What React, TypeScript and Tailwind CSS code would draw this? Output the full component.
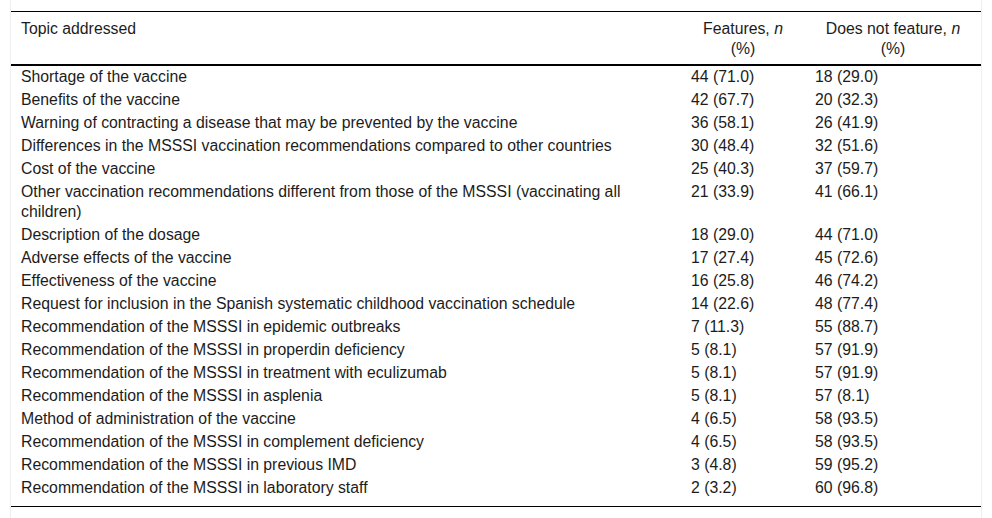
const rows: [string, string, string][] = [
  ['Shortage of the vaccine', '44 (71.0)', '18 (29.0)'],
  ['Benefits of the vaccine', '42 (67.7)', '20 (32.3)'],
  ['Warning of contracting a disease that may be prevented by the vaccine', '36 (58.1)', '26 (41.9)'],
  ['Differences in the MSSSI vaccination recommendations compared to other countries', '30 (48.4)', '32 (51.6)'],
  ['Cost of the vaccine', '25 (40.3)', '37 (59.7)'],
  [
    'Other vaccination recommendations different from those of the MSSSI (vaccinating all children)',
    '21 (33.9)',
    '41 (66.1)',
  ],
  ['Description of the dosage', '18 (29.0)', '44 (71.0)'],
  ['Adverse effects of the vaccine', '17 (27.4)', '45 (72.6)'],
  ['Effectiveness of the vaccine', '16 (25.8)', '46 (74.2)'],
  ['Request for inclusion in the Spanish systematic childhood vaccination schedule', '14 (22.6)', '48 (77.4)'],
  ['Recommendation of the MSSSI in epidemic outbreaks', '7 (11.3)', '55 (88.7)'],
  ['Recommendation of the MSSSI in properdin deficiency', '5 (8.1)', '57 (91.9)'],
  ['Recommendation of the MSSSI in treatment with eculizumab', '5 (8.1)', '57 (91.9)'],
  ['Recommendation of the MSSSI in asplenia', '5 (8.1)', '57 (8.1)'],
  ['Method of administration of the vaccine', '4 (6.5)', '58 (93.5)'],
  ['Recommendation of the MSSSI in complement deficiency', '4 (6.5)', '58 (93.5)'],
  ['Recommendation of the MSSSI in previous IMD', '3 (4.8)', '59 (95.2)'],
  ['Recommendation of the MSSSI in laboratory staff', '2 (3.2)', '60 (96.8)'],
];

// last row carries extra space above the closing rule
const cell = 'px-[10px] pt-px pb-[2px] align-top group-last:pb-[8px]';
const head = 'px-[10px] pt-[7px] pb-[5px] align-top font-normal';

export default function App() {
  return (
    <div className="min-h-[518px] bg-white px-[10px] font-['Liberation_Sans',Arial,sans-serif] text-[15.8px] leading-[20px] text-[#1c1c1c]">
      <div className="min-h-[518px] border-x border-[#eeeeee] pt-[11px]">
        <table className="w-[970px] table-fixed border-collapse">
          <colgroup>
            <col className="w-[670px]" />
            <col className="w-[124px]" />
            <col className="w-[176px]" />
          </colgroup>
          <thead>
            <tr className="border-t border-b-2 border-black">
              <th className={`${head} text-left`}>Topic addressed</th>
              <th className={`${head} text-center`}>
                Features, <i>n</i> (%)
              </th>
              <th className={`${head} text-center`}>
                Does not feature, <i>n</i> (%)
              </th>
            </tr>
          </thead>
          <tbody className="border-b border-black">
            {rows.map(([topic, yes, no]) => (
              <tr key={topic} className="group">
                <td className={cell}>{topic}</td>
                <td className={cell}>{yes}</td>
                <td className={cell}>{no}</td>
              </tr>
            ))}
          </tbody>
        </table>
      </div>
    </div>
  );
}
